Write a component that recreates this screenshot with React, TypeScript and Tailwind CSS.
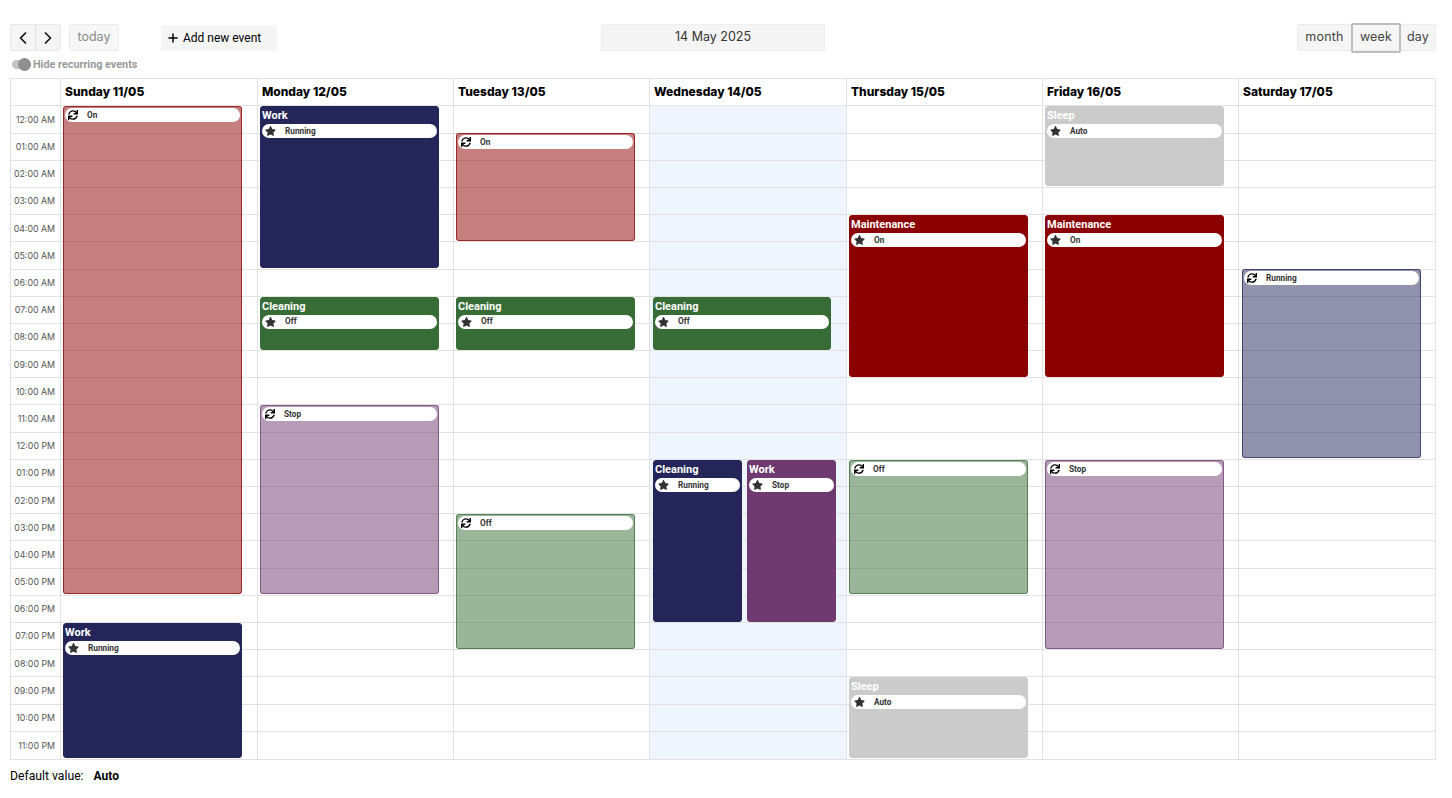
import { ChevronLeft, ChevronRight, Plus } from 'lucide-react';
import { FaStar, FaSync } from 'react-icons/fa';

const ROW_HEIGHT = 27.2;

const hours = [
  '12:00 AM', '01:00 AM', '02:00 AM', '03:00 AM', '04:00 AM', '05:00 AM',
  '06:00 AM', '07:00 AM', '08:00 AM', '09:00 AM', '10:00 AM', '11:00 AM',
  '12:00 PM', '01:00 PM', '02:00 PM', '03:00 PM', '04:00 PM', '05:00 PM',
  '06:00 PM', '07:00 PM', '08:00 PM', '09:00 PM', '10:00 PM', '11:00 PM',
];

interface CalEvent {
  start: number;
  end: number;
  title?: string;
  value: string;
  recurring?: boolean;
  tone: string;
  place?: 'left' | 'right' | 'inset' | 'today';
}

const days: { label: string; width: string; today?: boolean; events: CalEvent[] }[] = [
  {
    label: 'Sunday 11/05',
    width: 'w-[197px]',
    events: [
      { start: 0, end: 18, value: 'On', recurring: true, tone: 'bg-[#8b0000]/50 border-[#8b0000]/70' },
      { start: 19, end: 24, title: 'Work', value: 'Running', tone: 'bg-[#242559] border-[#242559]' },
    ],
  },
  {
    label: 'Monday 12/05',
    width: 'w-[196px]',
    events: [
      { start: 0, end: 6, title: 'Work', value: 'Running', tone: 'bg-[#242559] border-[#242559]' },
      { start: 7, end: 9, title: 'Cleaning', value: 'Off', tone: 'bg-[#386c37] border-[#386c37]' },
      { start: 11, end: 18, value: 'Stop', recurring: true, tone: 'bg-[#6f3a70]/50 border-[#6f3a70]/70' },
    ],
  },
  {
    label: 'Tuesday 13/05',
    width: 'w-[196px]',
    events: [
      { start: 1, end: 5, value: 'On', recurring: true, tone: 'bg-[#8b0000]/50 border-[#8b0000]/70' },
      { start: 7, end: 9, title: 'Cleaning', value: 'Off', tone: 'bg-[#386c37] border-[#386c37]' },
      { start: 15, end: 20, value: 'Off', recurring: true, tone: 'bg-[#386c37]/50 border-[#386c37]/70' },
    ],
  },
  {
    label: 'Wednesday 14/05',
    width: 'w-[197px]',
    today: true,
    events: [
      { start: 7, end: 9, title: 'Cleaning', value: 'Off', tone: 'bg-[#386c37] border-[#386c37]', place: 'today' },
      { start: 13, end: 19, title: 'Cleaning', value: 'Running', tone: 'bg-[#242559] border-[#242559]', place: 'left' },
      { start: 13, end: 19, title: 'Work', value: 'Stop', tone: 'bg-[#6f3a70] border-[#6f3a70]', place: 'right' },
    ],
  },
  {
    label: 'Thursday 15/05',
    width: 'w-[196px]',
    events: [
      { start: 4, end: 10, title: 'Maintenance', value: 'On', tone: 'bg-[#8b0000] border-[#8b0000]' },
      { start: 13, end: 18, value: 'Off', recurring: true, tone: 'bg-[#386c37]/50 border-[#386c37]/70' },
      { start: 21, end: 24, title: 'Sleep', value: 'Auto', tone: 'bg-[#cbcbcb] border-[#cbcbcb]' },
    ],
  },
  {
    label: 'Friday 16/05',
    width: 'w-[196px]',
    events: [
      { start: 0, end: 3, title: 'Sleep', value: 'Auto', tone: 'bg-[#cbcbcb] border-[#cbcbcb]' },
      { start: 4, end: 10, title: 'Maintenance', value: 'On', tone: 'bg-[#8b0000] border-[#8b0000]' },
      { start: 13, end: 20, value: 'Stop', recurring: true, tone: 'bg-[#6f3a70]/50 border-[#6f3a70]/70' },
    ],
  },
  {
    label: 'Saturday 17/05',
    width: 'flex-1',
    events: [
      { start: 6, end: 13, value: 'Running', recurring: true, tone: 'bg-[#242559]/50 border-[#242559]/70', place: 'inset' },
    ],
  },
];

const EventBlock = ({ event }: { event: CalEvent }) => {
  const top = event.start * ROW_HEIGHT - 0.2;
  const height = (event.end - event.start) * ROW_HEIGHT - 1.4;
  const sideClass =
    event.place === 'left'
      ? 'left-[3px] w-[89px]'
      : event.place === 'right'
        ? 'left-[97px] w-[89px]'
        : event.place === 'inset'
          ? 'left-[3px] w-[179px]'
          : event.place === 'today'
            ? 'left-[3px] w-[178px]'
            : 'left-[2px] w-[179px]';

  return (
    <div
      className={`absolute overflow-hidden rounded-[3px] border px-px ${sideClass} ${event.tone}`}
      style={{ top, height }}
    >
      {event.title && (
        <div className="pt-[2px] text-[11px] leading-[13px] font-bold text-white">{event.title}</div>
      )}
      <div className={`flex h-[14px] items-center rounded-full bg-white pl-[3px] text-[#333] ${event.title ? 'mt-[2px]' : 'mt-px'}`}>
        {event.recurring ? (
          <FaSync className="h-[10px] w-[10px] text-black" />
        ) : (
          <FaStar className="h-[10px] w-[11px] text-[#333]" />
        )}
        <span className="ml-[9px] text-[8.25px] leading-none font-bold">{event.value}</span>
      </div>
    </div>
  );
};

export default function App() {
  const display = "font-['Inter',sans-serif]";

  return (
    <div className="h-[798px] overflow-hidden bg-white pr-[16px] pl-[10px] pt-[24px] font-['Roboto',sans-serif] text-black">
      <div className="relative flex h-[27px] items-center">
        <div className="flex h-[27px] w-[51px] rounded-[3px] border border-[#e8e8e8] bg-[#f5f5f5]">
          <button className="flex flex-1 items-center justify-center border-r border-[#e0e0e0]">
            <ChevronLeft className="h-[20px] w-[20px] text-[#111]" strokeWidth={2} />
          </button>
          <button className="flex flex-1 items-center justify-center">
            <ChevronRight className="h-[20px] w-[20px] text-[#111]" strokeWidth={2} />
          </button>
        </div>
        <button className={`ml-[8px] h-[27px] w-[50px] rounded-[3px] border border-[#ececec] bg-[#f7f7f7] text-[12.5px] text-[#8a8a8a] ${display}`}>
          today
        </button>
        <button className="ml-[42px] flex h-[26px] w-[116px] items-center bg-[#f5f5f5] pl-[5px] text-[12px] font-normal">
          <Plus className="mr-[3px] h-[14px] w-[14px]" strokeWidth={2.5} />
          Add new event
        </button>
        <div className={`ml-[324px] flex h-[27px] w-[224px] items-center justify-center border border-[#efefef] bg-[#f5f5f5] text-[12.5px] text-[#333] ${display}`}>
          14 May 2025
        </div>
        <div className={`ml-auto flex h-[27px] items-center rounded-[3px] border border-[#ececec] bg-[#f5f5f5] text-[12.5px] tracking-[0.2px] text-[#444] ${display}`}>
          <span className="flex h-full w-[53px] items-center justify-center">month</span>
          <span className="flex h-[30px] w-[50px] items-center justify-center rounded-[2px] border-2 border-[#bdbdbd]">week</span>
          <span className="flex h-full w-[34px] items-center justify-center">day</span>
        </div>
      </div>

      <div className="mt-[6px] flex h-[15px] items-center">
        <div className="relative ml-[2px] h-[9px] w-[19px] rounded-full bg-[#c4c4c4]">
          <div className="absolute -top-[2px] right-0 h-[13px] w-[13px] rounded-full bg-[#8f8f8f]" />
        </div>
        <span className="ml-[2px] pt-px text-[10.8px] font-bold text-[#999]">Hide recurring events</span>
      </div>

      <div className="mt-[6px] border border-[#e2e2e2]">
        <div className={`flex h-[27.4px] border-b border-[#e2e2e2] text-[12px] font-extrabold ${display}`}>
          <div className="w-[50px] border-r border-[#e2e2e2]" />
          {days.map((day, i) => (
            <div
              key={day.label}
              className={`flex items-center pl-[4px] ${day.width} ${i < days.length - 1 ? 'border-r border-[#e2e2e2]' : ''}`}
            >
              {day.label}
            </div>
          ))}
        </div>
        <div className="flex">
          <div className={`w-[50px] border-r border-[#e2e2e2] text-[8.8px] whitespace-nowrap text-[#555] ${display}`}>
            {hours.map((hour, i) => (
              <div
                key={hour}
                className={`flex h-[27.2px] items-center justify-end pr-[5px] ${i < hours.length - 1 ? 'border-b border-[#e2e2e2]' : ''}`}
              >
                {hour}
              </div>
            ))}
          </div>
          {days.map((day, i) => (
            <div
              key={day.label}
              className={`relative ${day.width} ${i < days.length - 1 ? 'border-r border-[#e2e2e2]' : ''} ${day.today ? 'bg-[#eff5fd]' : ''}`}
            >
              {hours.map((hour, r) => (
                <div key={hour} className={`h-[27.2px] ${r < hours.length - 1 ? 'border-b border-[#e2e2e2]' : ''}`} />
              ))}
              {day.events.map((event, e) => (
                <EventBlock key={e} event={event} />
              ))}
            </div>
          ))}
        </div>
      </div>

      <div className="mt-[9px] text-[12.2px] leading-[15px]">
        Default value:<span className="ml-[10px] text-[12px] font-bold">Auto</span>
      </div>
    </div>
  );
}
